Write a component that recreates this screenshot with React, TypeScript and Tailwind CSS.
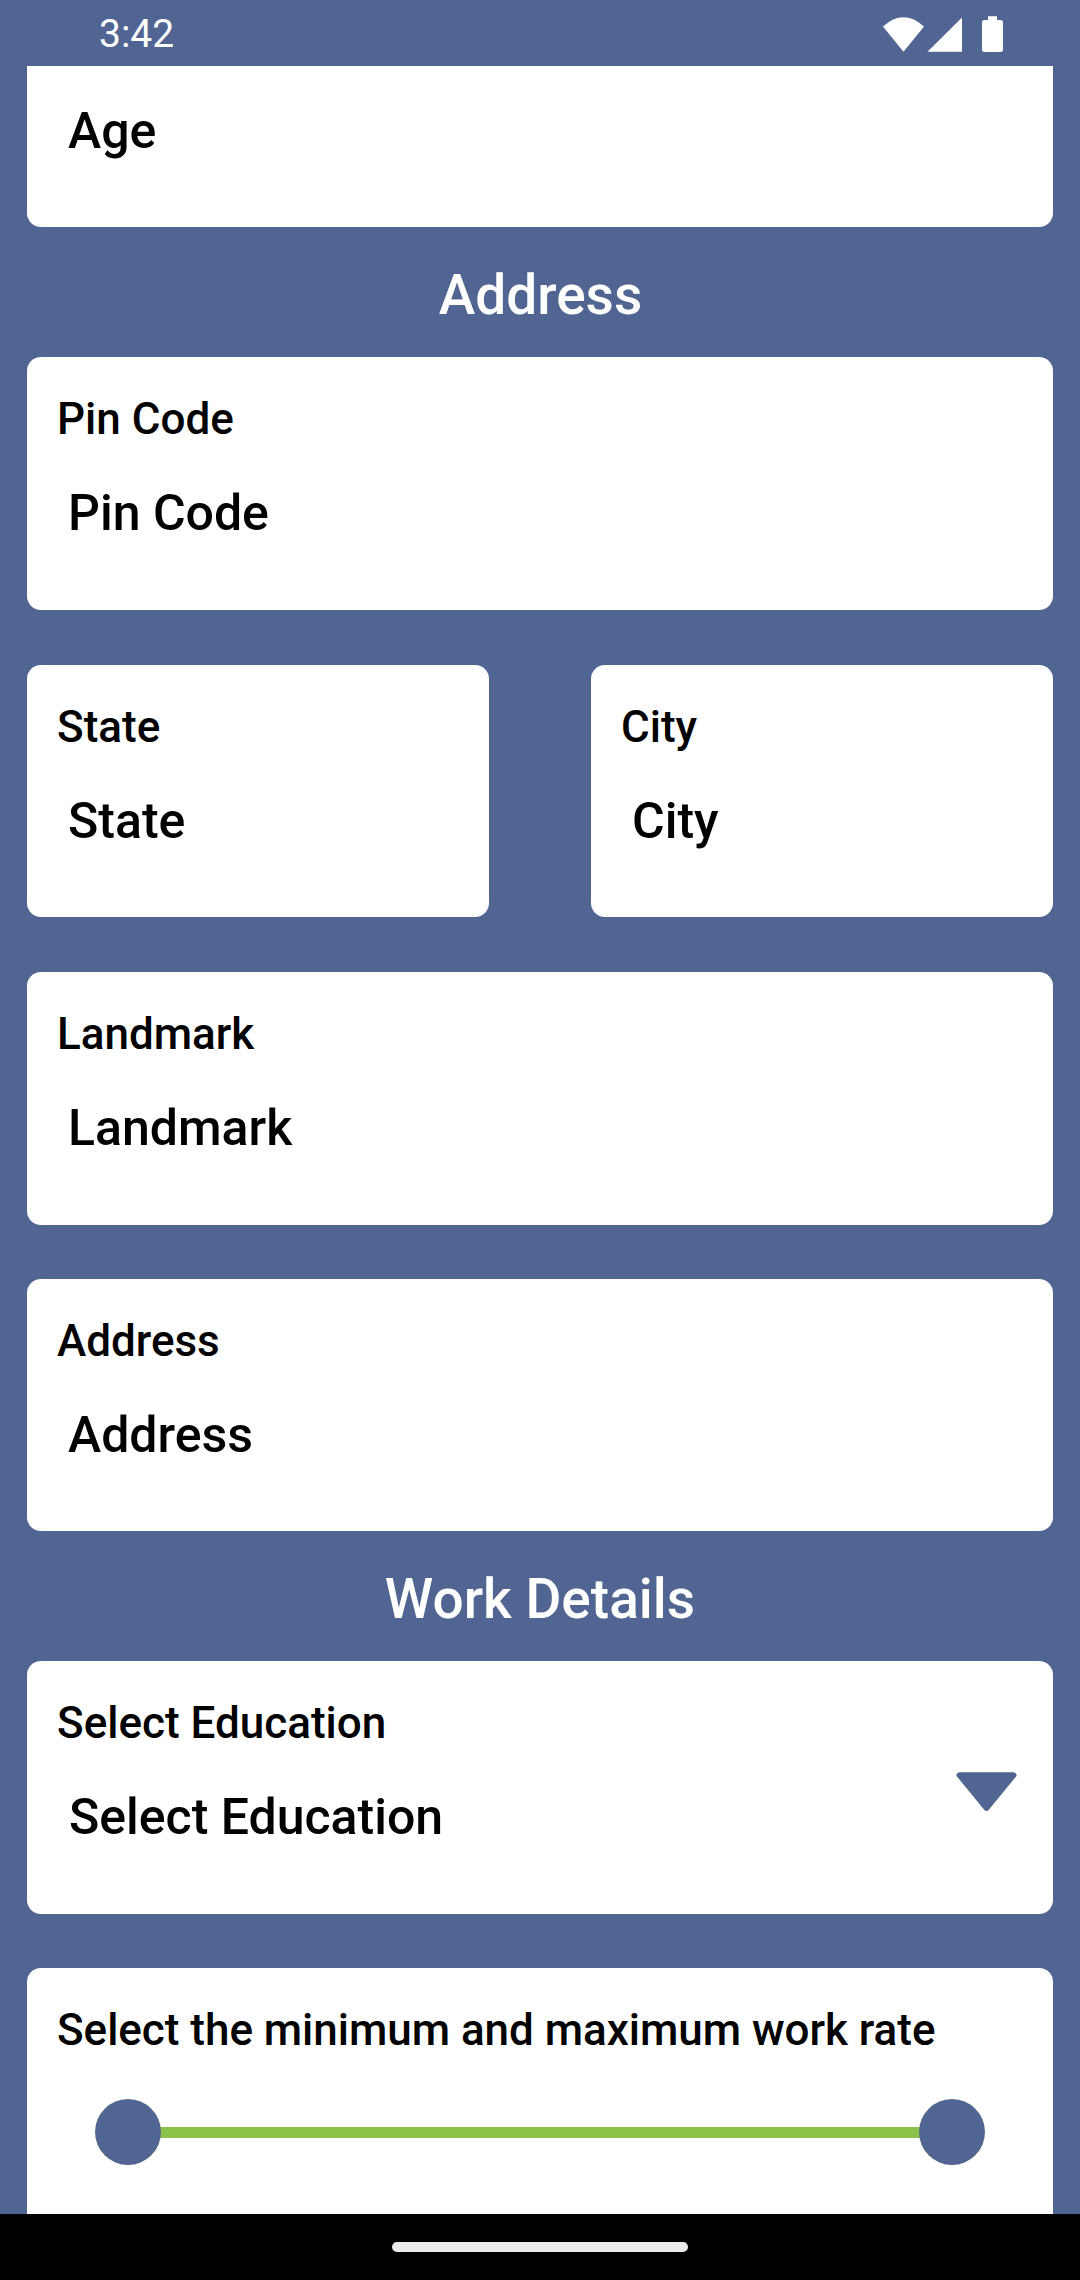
import type { ReactNode } from "react";

type CardProps = { label: string; value?: string; className?: string; valueClass?: string; labelClass?: string; children?: ReactNode };

function Card({ label, value, className = "", valueClass = "pl-[11px]", labelClass = "", children }: CardProps) {
  return (
    <section className={`shrink-0 rounded-[14px] bg-white pl-[30px] pt-9 text-black ${className}`}>
      <div className={`h-[52px] whitespace-nowrap text-[44px] font-medium leading-[52px] ${labelClass}`}>{label}</div>
      {value && <div className={`mt-[39px] whitespace-nowrap text-[50px] font-medium leading-[58px] ${valueClass}`}>{value}</div>}
      {children}
    </section>
  );
}

function Heading({ children, className = "" }: { children: ReactNode; className?: string }) {
  return (
    <h2 className={`h-[130px] shrink-0 pt-9 text-center text-[55px] font-medium leading-[64px] text-white ${className}`}>{children}</h2>
  );
}

export default function App() {
  return (
    <div className="flex h-[2280px] w-[1080px] flex-col overflow-hidden bg-[#516592] font-['Roboto',sans-serif]">
      <header className="flex h-[66px] shrink-0 justify-between pl-[99px] pr-[76px] text-white">
        <span className="pt-[11px] text-[39px] leading-[47px]">3:42</span>
        <svg width="121" height="66" viewBox="883 0 121 66" fill="white">
          <path d="M883 26.5Q903.500 8 924 26.500L903.500 51.700Z" />
          <path d="M962 17.500V51.700H927.500Z" />
          <path d="M988 16.200h9v3.700h3.500q2.500 0 2.500 2.500v27q0 2.500-2.500 2.500h-16q-2.500 0-2.500-2.500v-27q0-2.500 2.500-2.500h3.500z" />
        </svg>
      </header>
      <main className="flex h-[2148px] flex-col overflow-hidden px-[27px]">
        <section className="h-[161px] shrink-0 rounded-b-[14px] bg-white pl-[41px] pt-9 text-[50px] font-medium leading-[58px] text-black">
          Age
        </section>
        <Heading className="pl-px">Address</Heading>
        <Card label="Pin Code" value="Pin Code" className="h-[253px]" />
        <div className="mt-[55px] flex h-[252px] shrink-0 justify-between">
          <Card label="State" value="State" className="w-[462px]" />
          <Card label="City" value="City" className="w-[462px]" />
        </div>
        <Card label="Landmark" value="Landmark" className="mt-[55px] h-[253px]" />
        <Card label="Address" value="Address" className="mt-[54px] h-[252px]" />
        <Heading>Work Details</Heading>
        <Card label="Select Education" value="Select Education" valueClass="pl-3" className="relative h-[253px]">
          <svg className="absolute right-[36px] top-[111px]" width="61" height="40" viewBox="0 0 61 40" fill="#516592">
            <path d="M3.500 0.300H57.500Q61 1 60.500 4L33 37.500Q30.500 40.500 28 37.500L0.500 4Q0 1 3.500 0.300Z" />
          </svg>
        </Card>
        <Card label="Select the minimum and maximum work rate" labelClass="tracking-[-0.03px]" className="mt-[54px] h-[300px]">
          <div className="ml-[38px] mt-[43px] flex w-[890px] items-center">
            <div className="z-10 size-[66px] rounded-full bg-[#516592]" />
            <div className="-mx-1 mt-px h-[11px] flex-1 bg-[#8bc34a]" />
            <div className="z-10 size-[66px] rounded-full bg-[#516592]" />
          </div>
        </Card>
      </main>
      <footer className="flex h-[66px] shrink-0 justify-center bg-black pt-7">
        <div className="h-[10px] w-[296px] rounded-full bg-[#ebebeb]" />
      </footer>
    </div>
  );
}
